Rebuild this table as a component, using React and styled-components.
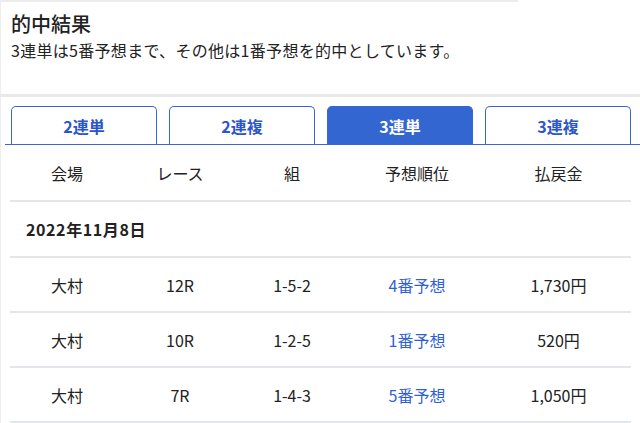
import { styled, createGlobalStyle } from 'styled-components';

const GlobalStyle = createGlobalStyle`
  body {
    margin: 0;
    background: #fff;
    font-family: "Noto Sans CJK JP", "Noto Sans", sans-serif;
    color: #222;
  }
`;

const Page = styled.div`
  width: 640px;
  height: 423px;
  overflow: hidden;
`;

const Intro = styled.section`
  height: 94px;
  box-sizing: border-box;
  padding: 11px 0 0 10px;
  border-left: 1px solid #eee;
  background: linear-gradient(#ececec, #ececec) top left / 517px 2px no-repeat, #fff;
`;

const Title = styled.h2`
  margin: 0;
  font-size: 20px;
  line-height: 26px;
  font-weight: 500;
`;

const Note = styled.p`
  margin: 1px 0 0;
  font-size: 16px;
  line-height: 24px;
  letter-spacing: 0.3px;
`;

const Divider = styled.div`
  height: 3px;
  background: #e9e9e9;
`;

const Main = styled.section`
  border-left: 1px solid #eee;
  padding: 9px 0 0 4px;
`;

const TabBar = styled.div`
  display: flex;
  gap: 12px;
  padding: 0 9px 0 6px;
  border-bottom: 1px solid #3a66d4;
`;

const Tab = styled.div`
  width: 146px;
  height: 38px;
  box-sizing: border-box;
  display: flex;
  align-items: center;
  justify-content: center;
  border: 1px solid #3a66d4;
  border-bottom: none;
  border-radius: 5px 5px 0 0;
  font-size: 16px;
  font-weight: 700;
  color: ${(p) => (p.$active ? '#fff' : '#2a55cc')};
  background: ${(p) => (p.$active ? '#3366d0' : '#fff')};
`;

const Table = styled.div`
  margin-left: 5px;
  width: 621px;
`;

const Row = styled.div`
  display: grid;
  grid-template-columns: 114px 112px 112px 138px 145px;
  align-items: center;
  height: 53px;
  border-bottom: 2px solid #e3e6ea;
  font-size: 16px;
`;

const HeadRow = styled(Row)`
  height: 55px;
`;

const Cell = styled.div`
  text-align: center;
  color: ${(p) => (p.$link ? '#2f5fd6' : '#222')};
`;

const DateRow = styled.div`
  box-sizing: border-box;
  height: 56px;
  display: flex;
  align-items: center;
  padding-left: 16px;
  border-bottom: 2px solid #e3e6ea;
  font-size: 16px;
  font-weight: 700;
  letter-spacing: 0.6px;
`;

const tabs = ['2連単', '2連複', '3連単', '3連複'];

const rows = [
  ['大村', '12R', '1-5-2', '4番予想', '1,730円'],
  ['大村', '10R', '1-2-5', '1番予想', '520円'],
  ['大村', '7R', '1-4-3', '5番予想', '1,050円'],
];

export default function App() {
  return (
    <>
      <GlobalStyle />
      <Page>
        <Intro>
          <Title>的中結果</Title>
          <Note>3連単は5番予想まで、その他は1番予想を的中としています。</Note>
        </Intro>
        <Divider />
        <Main>
          <TabBar>
            {tabs.map((t) => (
              <Tab key={t} $active={t === '3連単'}>
                {t}
              </Tab>
            ))}
          </TabBar>
          <Table>
            <HeadRow>
              <Cell>会場</Cell>
              <Cell>レース</Cell>
              <Cell>組</Cell>
              <Cell>予想順位</Cell>
              <Cell>払戻金</Cell>
            </HeadRow>
            <DateRow>2022年11月8日</DateRow>
            {rows.map((r) => (
              <Row key={r[1]}>
                {r.map((c, i) => (
                  <Cell key={i} $link={i === 3}>
                    {c}
                  </Cell>
                ))}
              </Row>
            ))}
          </Table>
        </Main>
      </Page>
    </>
  );
}
